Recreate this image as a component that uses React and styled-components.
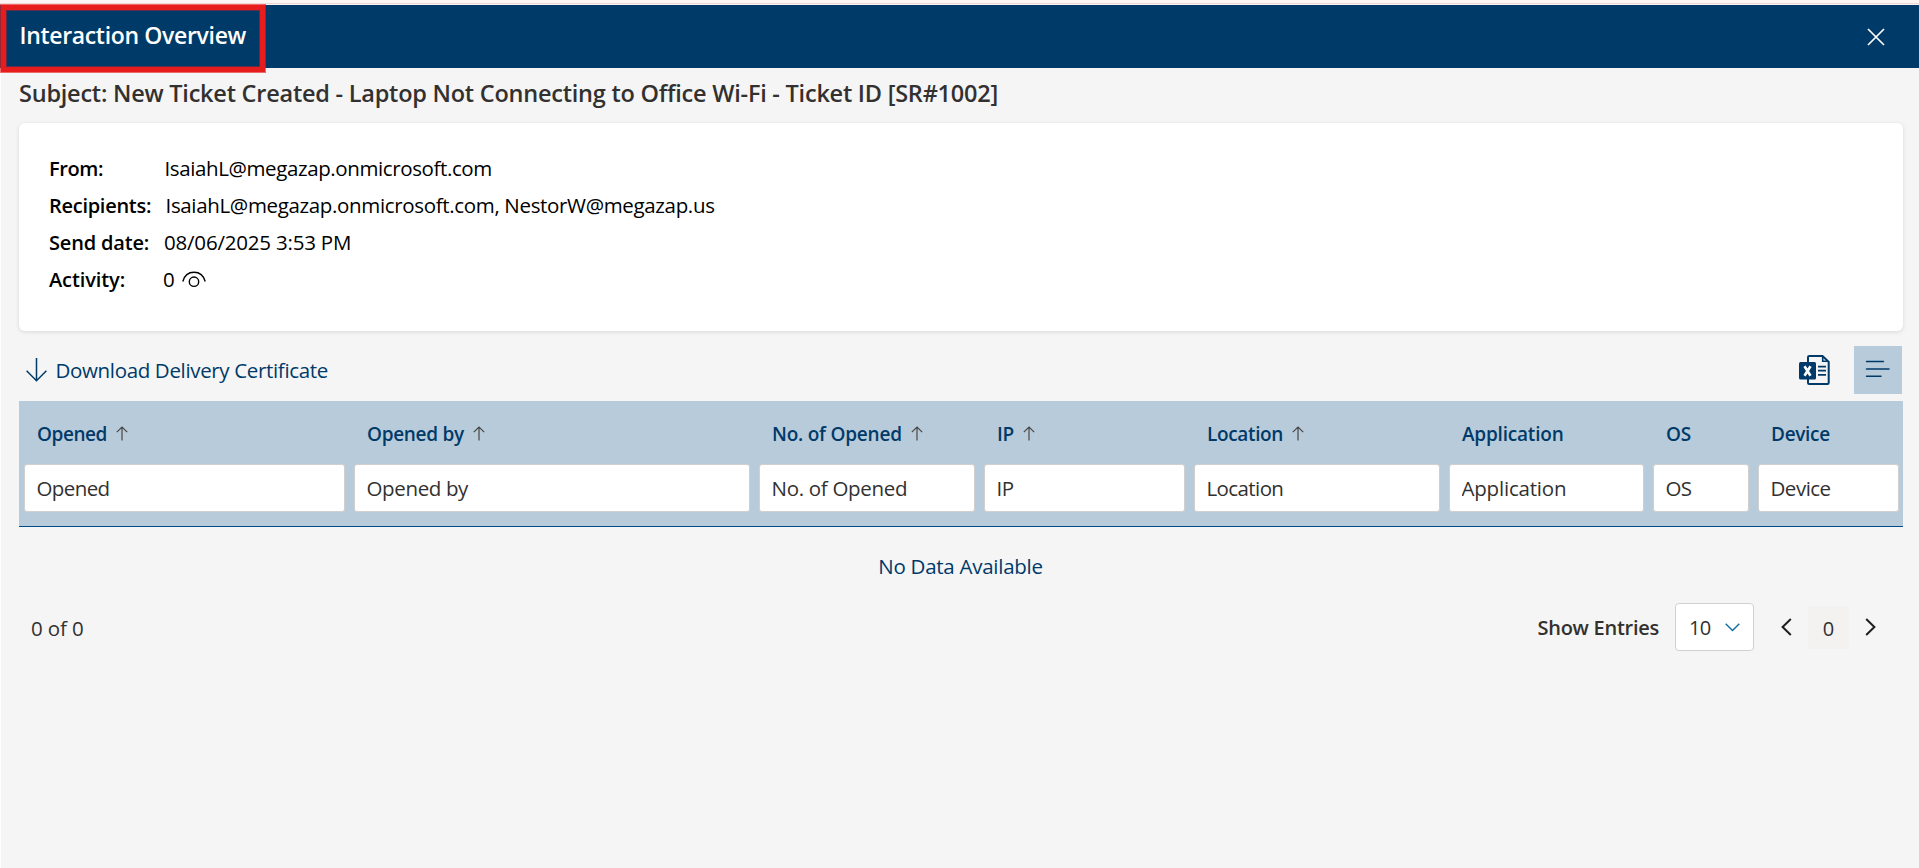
import React from "react";
import styled, { createGlobalStyle } from "styled-components";

const GlobalStyle = createGlobalStyle`
  * { box-sizing: border-box; }
  html, body { margin: 0; height: 100%; }
  body {
    background: #f5f5f5;
    font-family: "Open Sans", "Segoe UI", sans-serif;
    font-size: 20px;
    color: #323130;
    overflow: hidden;
  }
  button, input { font-family: inherit; }
  svg { display: block; flex: none; }
`;

const Panel = styled.div`
  height: 868px;
  border-left: 1px solid #fff;
  background: #f5f5f5;
`;

const PageEdge = styled.div`
  height: 5px;
  margin-left: -1px;
  background: #fdf5f4;
  border-bottom: 1px solid #fdf3f2;
  box-shadow: inset 0 -1px 0 #ecd6d6;
`;

const Header = styled.header`
  position: relative;
  height: 63px;
  margin-left: -1px;
  padding: 0 34px 0 19.5px;
  display: flex;
  align-items: center;
  justify-content: space-between;
  background: #003a69;
`;

const Title = styled.h1`
  margin: 0;
  padding-bottom: 3px;
  font-size: 23px;
  line-height: 30px;
  font-weight: 600;
  color: #fff;
  letter-spacing: ${(p) => p.$track}px;
  white-space: nowrap;
`;

const Highlight = styled.div`
  position: absolute;
  left: 1px;
  top: 0;
  width: 264px;
  height: 67px;
  border: 5px solid #e71d1d;
  box-shadow: 0 0 0 1px rgba(231, 29, 29, 0.65), inset 0 0 0 1px rgba(231, 29, 29, 0.4);
`;

const PlainButton = styled.button`
  border: 0;
  padding: 0;
  background: none;
  color: inherit;
  display: flex;
  align-items: center;
`;

const Subject = styled.h2`
  margin: 0;
  height: 55px;
  padding: 0 0 4px 18px;
  font-size: 23.5px;
  line-height: 51px;
  font-weight: 600;
  letter-spacing: ${(p) => p.$track}px;
  white-space: nowrap;
`;

const Card = styled.section`
  margin: 0 16px 0 18px;
  height: 208px;
  padding: 26.500px 30px;
  border-radius: 6px;
  background: #fff;
  color: #000;
  box-shadow: 0 1px 4px rgba(0, 0, 0, 0.12);
`;

const InfoRow = styled.div`
  display: flex;
  height: 37px;
  line-height: 37px;
  white-space: nowrap;
`;

const InfoLabel = styled.span`
  width: ${(p) => p.$w}px;
  font-weight: 600;
  letter-spacing: ${(p) => p.$track}px;
`;

const InfoValue = styled.span`
  display: flex;
  align-items: center;
  gap: 8px;
  font-size: 20.500px;
  letter-spacing: ${(p) => p.$track}px;
`;

const Toolbar = styled.div`
  height: 70px;
  margin: 0 17px 0 18px;
  padding: 15px 0 7px 7px;
  display: flex;
  align-items: center;
  color: #003a69;
`;

const DownloadLink = styled(PlainButton)`
  flex: 1;
  gap: 8.500px;
  font-size: 20.500px;
  letter-spacing: ${(p) => p.$track}px;
`;

const MenuButton = styled.button`
  width: 48px;
  height: 48px;
  margin-left: 24px;
  padding: 0;
  border: 0;
  background: #b8cbda;
  color: #003a69;
`;

const Table = styled.div`
  margin: 0 16px 0 18px;
  height: 126px;
  padding: 0 4px 0 5px;
  display: grid;
  grid-template-columns: 321px 396px 216px 201px 246px 195px 96px 141px;
  grid-template-rows: 63px 48px;
  column-gap: 9px;
  background: #b8cbda;
  border-bottom: 1px solid #004b87;
`;

const HeadCell = styled.div`
  padding: 2px 0 0 13px;
  display: flex;
  align-items: center;
  gap: 9px;
  font-weight: 600;
  font-size: 19px;
  color: #003a69;
  letter-spacing: ${(p) => p.$track}px;
  white-space: nowrap;
`;

const FilterInput = styled.input`
  width: 100%;
  height: 48px;
  padding: 0 11.500px;
  border: 1px solid #d2d0ce;
  border-radius: 3px;
  background: #fff;
  font-size: 20.500px;
  letter-spacing: ${(p) => p.$track}px;
  color: #323130;
  &::placeholder { color: #323130; opacity: 1; }
`;

const Empty = styled.div`
  height: 77px;
  padding-left: 1px;
  line-height: 78px;
  font-size: 20.500px;
  text-align: center;
  color: #003a69;
  letter-spacing: ${(p) => p.$track}px;
`;

const Footer = styled.footer`
  height: 46px;
  padding: 0 43px 0 30px;
  display: flex;
  align-items: center;
  justify-content: space-between;
`;

const Paging = styled.div`
  display: flex;
  align-items: center;
`;

const FooterText = styled.span`
  line-height: 30px;
  padding-top: 2px;
  font-size: ${(p) => (p.$strong ? 20 : 20.500)}px;
  font-weight: ${(p) => (p.$strong ? 600 : 400)};
  margin-right: ${(p) => p.$after || 0};
  letter-spacing: ${(p) => p.$track}px;
`;

const Select = styled.div`
  width: 79px;
  height: 48px;
  padding: 0 13px 0 13px;
  display: flex;
  align-items: center;
  justify-content: space-between;
  border: 1px solid #d2d0ce;
  border-radius: 4px;
  background: #fff;
  letter-spacing: -0.600px;
`;

const Pager = styled.nav`
  margin-left: 27px;
  display: flex;
  align-items: center;
  gap: 16px;
  color: #201f1e;
`;

const PageNumber = styled.span`
  width: 41px;
  height: 43px;
  line-height: 45px;
  text-align: center;
  background: #f3f2f1;
  color: #323130;
`;

const CloseIcon = () => (
  <svg width="18" height="18" viewBox="0 0 18 18" fill="none" stroke="#fff" strokeWidth="1.7">
    <path d="M1 1L17 17M17 1L1 17" />
  </svg>
);

const EyeIcon = () => (
  <svg width="24" height="17" viewBox="0 0 24 17" fill="none" stroke="#000" strokeWidth="1.4">
    <path d="M0.8 10.5C2.4 4.4 6.8 1.2 12 1.2S21.6 4.4 23.2 10.5" />
    <circle cx="12" cy="10.700" r="4.700" />
  </svg>
);

const DownArrow = () => (
  <svg width="21" height="24" viewBox="0 0 21 24" fill="none" stroke="#003a69" strokeWidth="1.5">
    <path d="M10.500 0V23M0.600 12.800L10.500 22.800L20.400 12.800" />
  </svg>
);

const SortArrow = () => (
  <svg width="12" height="15" viewBox="0 0 12 15" fill="none" stroke="#484644" strokeWidth="1.2">
    <path d="M6 14.500V1M0.800 6.200L6 1L11.200 6.200" />
  </svg>
);

const ExcelIcon = () => (
  <svg width="31" height="30" viewBox="0 0 31 30" fill="none" stroke="#003a69">
    <path d="M9 7V2.200Q9 1 10.200 1H23.500L29.700 7V27.800Q29.700 29 28.500 29H10.200Q9 29 9 27.800V24" strokeWidth="2" />
    <path d="M23.700 1V6.300H29" strokeWidth="1.6" />
    <path d="M19 11.600H27M19 15.700H27M19 19.800H27" strokeWidth="1.8" />
    <rect x="0" y="7" width="17" height="17.500" rx="1.500" fill="#003a69" stroke="none" />
    <path d="M5.500 11.200L11.500 20.800M11.500 11.200L5.500 20.800" stroke="#fff" strokeWidth="2.6" />
  </svg>
);

const MenuLines = () => (
  <svg width="48" height="48" viewBox="0 0 48 48" fill="none" stroke="#003a69" strokeWidth="1.5">
    <path d="M12.500 15.500H29.500M12.500 23H35M12.500 30.200H27" strokeLinecap="round" />
  </svg>
);

const SelectChevron = () => (
  <svg width="15" height="9" viewBox="0 0 15 9" fill="none" stroke="#0f6ca0" strokeWidth="1.4">
    <path d="M0.700 0.700L7.500 7.500L14.300 0.700" />
  </svg>
);

const PageChevron = ({ d }) => (
  <svg width="11" height="18" viewBox="0 0 11 18" fill="none" stroke="#201f1e" strokeWidth="2">
    <path d={d} />
  </svg>
);

const info = [
  { label: "From:", value: "IsaiahL@megazap.onmicrosoft.com", w: 115.5, lt: -0.4, vt: -0.39 },
  { label: "Recipients:", value: "IsaiahL@megazap.onmicrosoft.com, NestorW@megazap.us", w: 116.5, lt: -0.28, vt: -0.34 },
  { label: "Send date:", value: "08/06/2025 3:53 PM", w: 115, lt: -0.18, vt: -0.2 },
  { label: "Activity:", value: "0", w: 114, lt: -0.1, vt: -0.3, eye: true },
];

const columns = [
  { name: "Opened", sort: true, ht: -0.45, it: -0.6 },
  { name: "Opened by", sort: true, ht: -0.3, it: -0.36 },
  { name: "No. of Opened", sort: true, ht: -0.22, it: -0.3 },
  { name: "IP", sort: true, ht: -0.3, it: -0.4 },
  { name: "Location", sort: true, ht: -0.35, it: -0.6 },
  { name: "Application", ht: -0.2, it: -0.2 },
  { name: "OS", ht: -0.3, it: -0.6 },
  { name: "Device", ht: -0.3, it: -0.5 },
];

export default function App() {
  return (
    <>
      <GlobalStyle />
      <Panel>
        <PageEdge />
        <Header>
          <Title $track={-0.33}>Interaction Overview</Title>
          <PlainButton aria-label="Close"><CloseIcon /></PlainButton>
          <Highlight />
        </Header>
        <Subject $track={-0.23}>
          Subject: New Ticket Created - Laptop Not Connecting to Office Wi-Fi - Ticket ID [SR#1002]
        </Subject>
        <Card>
          {info.map((r) => (
            <InfoRow key={r.label}>
              <InfoLabel $w={r.w} $track={r.lt}>{r.label}</InfoLabel>
              <InfoValue $track={r.vt}>
                {r.value}
                {r.eye && <EyeIcon />}
              </InfoValue>
            </InfoRow>
          ))}
        </Card>
        <Toolbar>
          <DownloadLink $track={-0.34}><DownArrow />Download Delivery Certificate</DownloadLink>
          <PlainButton aria-label="Export to Excel"><ExcelIcon /></PlainButton>
          <MenuButton aria-label="Columns"><MenuLines /></MenuButton>
        </Toolbar>
        <Table>
          {columns.map((c) => (
            <HeadCell key={c.name} $track={c.ht}>{c.name}{c.sort && <SortArrow />}</HeadCell>
          ))}
          {columns.map((c) => (
            <FilterInput key={c.name} placeholder={c.name} $track={c.it} />
          ))}
        </Table>
        <Empty $track={-0.27}>No Data Available</Empty>
        <Footer>
          <FooterText $track={-0.1}>0 of 0</FooterText>
          <Paging>
            <FooterText $strong $track={-0.26} $after="16px">Show Entries</FooterText>
            <Select>10<SelectChevron /></Select>
            <Pager>
              <PlainButton aria-label="Previous"><PageChevron d="M9.8 1L1.6 9L9.8 17" /></PlainButton>
              <PageNumber>0</PageNumber>
              <PlainButton aria-label="Next"><PageChevron d="M1.2 1L9.4 9L1.2 17" /></PlainButton>
            </Pager>
          </Paging>
        </Footer>
      </Panel>
    </>
  );
}
